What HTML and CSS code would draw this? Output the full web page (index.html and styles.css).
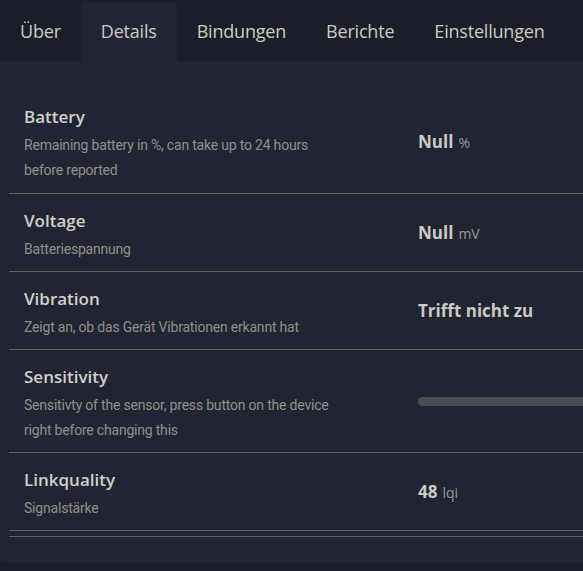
FILE: index.html
```html
<!DOCTYPE html>
<html lang="de">
<head>
<meta charset="utf-8">
<title>Details</title>
<link rel="stylesheet" href="styles.css">
</head>
<body>
<nav class="tabs">
  <div class="tab">Über</div>
  <div class="tab active">Details</div>
  <div class="tab">Bindungen</div>
  <div class="tab">Berichte</div>
  <div class="tab">Einstellungen</div>
</nav>
<main class="panel">
  <div class="row">
    <div class="info">
      <div class="title">Battery</div>
      <div class="desc">Remaining battery in %, can take up to 24 hours before reported</div>
    </div>
    <div class="value"><b>Null</b><span class="unit">%</span></div>
  </div>
  <div class="row">
    <div class="info">
      <div class="title">Voltage</div>
      <div class="desc">Batteriespannung</div>
    </div>
    <div class="value"><b>Null</b><span class="unit">mV</span></div>
  </div>
  <div class="row">
    <div class="info">
      <div class="title">Vibration</div>
      <div class="desc">Zeigt an, ob das Gerät Vibrationen erkannt hat</div>
    </div>
    <div class="value"><b>Trifft nicht zu</b></div>
  </div>
  <div class="row">
    <div class="info">
      <div class="title">Sensitivity</div>
      <div class="desc">Sensitivty of the sensor, press button on the device right before changing this</div>
    </div>
    <div class="value"><div class="track"></div></div>
  </div>
  <div class="row">
    <div class="info">
      <div class="title">Linkquality</div>
      <div class="desc">Signalstärke</div>
    </div>
    <div class="value"><b>48</b><span class="unit">lqi</span></div>
  </div>
  <div class="foot"></div>
</main>
</body>
</html>
```

FILE: styles.css
```css
html, body {
  margin: 0;
  padding: 0;
  background: #1b1e29;
  overflow: hidden;
}
body {
  font-family: "Open Sans", "Noto Sans", sans-serif;
  color: #d3cfc9;
}
.tabs {
  display: flex;
  height: 61px;
  padding-top: 2px;
  box-sizing: border-box;
}
.tab {
  display: flex;
  align-items: center;
  padding: 0 20px 1px;
  font-size: 18px;
  letter-spacing: -0.2px;
  color: #cfcbc5;
  border-radius: 5px 5px 0 0;
}
.tab.active {
  background: #212533;
}
.panel {
  background: #212533;
  padding: 29px 0 25px 9px;
  border-bottom-left-radius: 5px;
  overflow: hidden;
}
.row {
  display: grid;
  grid-template-columns: 409px 1fr;
  border-bottom: 1px solid #6b6456;
}
.row:first-child .info {
  padding-bottom: 10px;
}
.info {
  padding: 14px 0 9px 15px;
}
.title {
  font-size: 17px;
  font-weight: 600;
  line-height: 26px;
  color: #d3cfc9;
}
.desc {
  margin-top: 3px;
  font-family: "Roboto", "Open Sans", sans-serif;
  font-size: 14px;
  letter-spacing: -0.2px;
  line-height: 25px;
  color: #928f8b;
  max-width: 312px;
}
.value {
  align-self: center;
  display: flex;
  align-items: baseline;
  gap: 5px;
}
.value b {
  font-size: 17px;
  font-weight: 700;
  color: #cdc9c3;
}
.unit {
  font-size: 14px;
  color: #9a9894;
}
.track {
  width: 220px;
  height: 9px;
  border-radius: 5px;
  background: #4a4d52;
}
.foot {
  height: 5px;
  border-bottom: 1px solid #6b6456;
}
```
